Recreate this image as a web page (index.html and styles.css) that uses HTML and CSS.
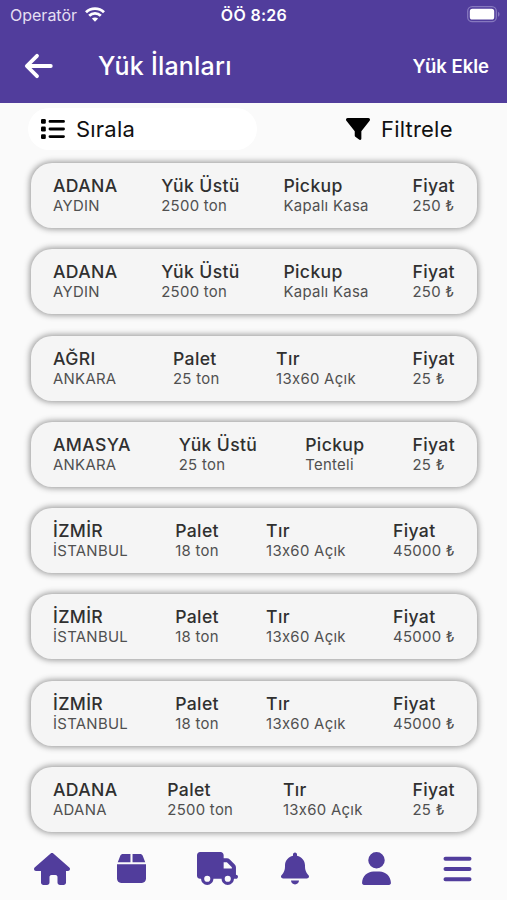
FILE: index.html
```html
<!DOCTYPE html>
<html lang="tr">
<head>
    <meta charset="UTF-8">
    <meta name="viewport" content="width=device-width, initial-scale=1.0">
    <title>Yük İlanları</title>
    <link rel="stylesheet" href="styles.css">
</head>
<body>
    <header>
        <div class="status-bar">
            <div class="carrier">
                <span>Operatör</span>
                <svg width="20" height="15" viewBox="0 0 20 15" fill="none" stroke="#fff" stroke-width="2.8">
                    <path d="M1 5.2C6 .3 14 .3 19 5.2"/>
                    <path d="M4.2 8.8c3.3-3.2 8.3-3.2 11.6 0"/>
                    <path d="M10 14.8 6.9 11.6c1.8-1.6 4.4-1.6 6.2 0z" fill="#fff" stroke="none"/>
                </svg>
            </div>
            <span class="time">ÖÖ 8:26</span>
            <div class="battery">
                <svg width="33" height="17" viewBox="0 0 33 17">
                    <rect x=".7" y=".7" width="28.6" height="15" rx="4.5" fill="none" stroke="#8678be" stroke-width="1.3"/>
                    <rect x="2.8" y="2.8" width="24.4" height="10.8" rx="2.6" fill="#fff"/>
                    <path d="M31 5.7c2 .8 2 4.2 0 5z" fill="#8678be"/>
                </svg>
            </div>
        </div>
        <div class="app-bar">
            <a href="#" class="back">
                <svg width="30" height="26" viewBox="0 0 30 26" fill="none" stroke="#fff" stroke-width="3.8" stroke-linecap="round" stroke-linejoin="round">
                    <path d="M13 2.8 2.8 13 13 23.2M3.5 13h23.3"/>
                </svg>
            </a>
            <h1>Yük İlanları</h1>
            <a href="#" class="add">Yük Ekle</a>
        </div>
    </header>

    <div class="toolbar">
        <button class="tool sort">
            <svg width="24" height="20" viewBox="0 0 24 20">
                <rect width="4.8" height="4.8" rx="1.2"/>
                <rect y="7.6" width="4.8" height="4.8" rx="1.2"/>
                <rect y="15.2" width="4.8" height="4.8" rx="1.2"/>
                <path d="M9 2.4h13.5M9 10h13.5M9 17.6h13.5" stroke="#000" stroke-width="2.9" stroke-linecap="round"/>
            </svg>
            <span>Sırala</span>
        </button>
        <button class="tool filter">
            <svg width="24" height="22" viewBox="0 0 25 22" preserveAspectRatio="none">
                <path d="M1.7 0h21.6c1.5 0 2.2 1.7 1.3 2.8L16 13.3v7.1c0 1.300-1.400 2-2.400 1.200L9.700 18.700c-.4-.3-.6-.8-.6-1.200v-4.200L.4 2.800C-.5 1.700.2 0 1.700 0z"/>
            </svg>
            <span>Filtrele</span>
        </button>
    </div>

    <main>
        <div class="card">
            <div class="col"><b>ADANA</b><span>AYDIN</span></div>
            <div class="col"><b>Yük Üstü</b><span>2500 ton</span></div>
            <div class="col"><b>Pickup</b><span>Kapalı Kasa</span></div>
            <div class="col"><b>Fiyat</b><span>250 ₺</span></div>
        </div>
        <div class="card">
            <div class="col"><b>ADANA</b><span>AYDIN</span></div>
            <div class="col"><b>Yük Üstü</b><span>2500 ton</span></div>
            <div class="col"><b>Pickup</b><span>Kapalı Kasa</span></div>
            <div class="col"><b>Fiyat</b><span>250 ₺</span></div>
        </div>
        <div class="card">
            <div class="col"><b>AĞRI</b><span>ANKARA</span></div>
            <div class="col"><b>Palet</b><span>25 ton</span></div>
            <div class="col"><b>Tır</b><span>13x60 Açık</span></div>
            <div class="col"><b>Fiyat</b><span>25 ₺</span></div>
        </div>
        <div class="card">
            <div class="col"><b>AMASYA</b><span>ANKARA</span></div>
            <div class="col"><b>Yük Üstü</b><span>25 ton</span></div>
            <div class="col"><b>Pickup</b><span>Tenteli</span></div>
            <div class="col"><b>Fiyat</b><span>25 ₺</span></div>
        </div>
        <div class="card">
            <div class="col"><b>İZMİR</b><span>İSTANBUL</span></div>
            <div class="col"><b>Palet</b><span>18 ton</span></div>
            <div class="col"><b>Tır</b><span>13x60 Açık</span></div>
            <div class="col"><b>Fiyat</b><span>45000 ₺</span></div>
        </div>
        <div class="card">
            <div class="col"><b>İZMİR</b><span>İSTANBUL</span></div>
            <div class="col"><b>Palet</b><span>18 ton</span></div>
            <div class="col"><b>Tır</b><span>13x60 Açık</span></div>
            <div class="col"><b>Fiyat</b><span>45000 ₺</span></div>
        </div>
        <div class="card">
            <div class="col"><b>İZMİR</b><span>İSTANBUL</span></div>
            <div class="col"><b>Palet</b><span>18 ton</span></div>
            <div class="col"><b>Tır</b><span>13x60 Açık</span></div>
            <div class="col"><b>Fiyat</b><span>45000 ₺</span></div>
        </div>
        <div class="card">
            <div class="col"><b>ADANA</b><span>ADANA</span></div>
            <div class="col"><b>Palet</b><span>2500 ton</span></div>
            <div class="col"><b>Tır</b><span>13x60 Açık</span></div>
            <div class="col"><b>Fiyat</b><span>25 ₺</span></div>
        </div>
    </main>

    <nav>
        <a href="#">
            <svg width="36" height="32" viewBox="0 0 576 512"><path d="M575.8 255.5c0 18-15 32.100-32 32.100h-32l.7 160.200c0 2.700-.2 5.400-.5 8.100V472c0 22.100-17.900 40-40 40h-56c-22.100 0-40-17.900-40-40v-88c0-17.700-14.300-32-32-32h-64c-17.700 0-32 14.300-32 32v88c0 22.100-17.900 40-40 40h-56c-22.100 0-40-17.900-40-40V287.600H32c-18 0-32-14-32-32.100 0-9 3-17 10-24L266.400 8c7-7 15-8 22-8s15 2 21 7l255.400 224.500c8 7 12 15 11 24z"/></svg>
        </a>
        <a href="#">
            <svg width="29" height="29" viewBox="0 0 448 448"><path d="M50.700 26.500C58 10 74 0 92 0h116v128H12zM240 0h116c18 0 34 10 41.300 26.500L436 128H240zM0 160h448v224c0 35.300-28.700 64-64 64H64c-35.300 0-64-28.700-64-64z"/></svg>
        </a>
        <a href="#">
            <svg width="41" height="33" viewBox="0 0 640 512"><path fill-rule="evenodd" d="M48 0C21.500 0 0 21.500 0 48v320c0 26.500 21.500 48 48 48h16c0 53 43 96 96 96s96-43 96-96h128c0 53 43 96 96 96s96-43 96-96h32c17.700 0 32-14.300 32-32s-14.300-32-32-32V237.300c0-17-6.700-33.300-18.700-45.300L512 114.700c-12-12-28.300-18.700-45.300-18.700H416V48c0-26.500-21.500-48-48-48zM416 160h50.700L544 237.300V256H416zM160 368a48 48 0 1 1 0 96 48 48 0 0 1 0-96zM480 368a48 48 0 1 1 0 96 48 48 0 0 1 0-96z"/></svg>
        </a>
        <a href="#">
            <svg width="28" height="33" viewBox="0 0 448 512"><path d="M224 0c-17.700 0-32 14.300-32 32v19.200C119 66 64 130.600 64 208v18.800c0 47-17.300 92.400-48.500 127.600l-7.400 8.300C-.3 372.100-2.300 385.600 2.800 397S19.400 416 32 416h384c12.600 0 24-7.400 29.200-19s3.100-24.900-5.300-34.300l-7.400-8.300C401.300 319.200 384 273.900 384 226.800V208c0-77.400-55-142-128-156.800V32c0-17.700-14.300-32-32-32zm45.300 493.300c12-12 18.700-28.300 18.700-45.300H160c0 17 6.700 33.300 18.700 45.300S207 512 224 512s33.300-6.700 45.300-18.700z"/></svg>
        </a>
        <a href="#">
            <svg width="29" height="33" viewBox="0 0 448 512"><path d="M224 256a128 128 0 1 0 0-256 128 128 0 0 0 0 256zm-45.700 48C79.800 304 0 383.800 0 482.300 0 498.700 13.300 512 29.700 512h388.600c16.400 0 29.700-13.300 29.700-29.700C448 383.800 368.200 304 269.700 304z"/></svg>
        </a>
        <a href="#">
            <svg width="29" height="26" viewBox="0 0 29 26" fill="none" stroke="#513d9c" stroke-width="4" stroke-linecap="round"><path d="M2.500 2.800h24M2.500 13h24M2.500 23.200h24"/></svg>
        </a>
    </nav>
</body>
</html>
```
FILE: styles.css
```css
* {
    margin: 0;
    padding: 0;
    box-sizing: border-box;
    font-family: 'Inter', sans-serif;
}

body {
    background-color: #fafafa;
    color: #303030;
    height: 100vh;
    display: flex;
    flex-direction: column;
    overflow: hidden;
}

a {
    color: inherit;
    text-decoration: none;
}

svg {
    display: block;
    flex-shrink: 0;
}

header {
    background-color: #513d9c;
    color: #fff;
    height: 103px;
}

.status-bar {
    height: 29px;
    padding: 0 7px 0 10px;
    display: grid;
    grid-template-columns: 1fr auto 1fr;
    align-items: center;
}

.carrier {
    display: flex;
    align-items: center;
    gap: 8px;
    font-size: 16px;
    color: #e4dff2;
}

.time {
    margin-right: 2px;
    font-size: 16px;
    font-weight: 600;
    letter-spacing: 0.3px;
}

.battery {
    display: flex;
    justify-content: flex-end;
}

.app-bar {
    height: 74px;
    padding: 0 18px 0 24px;
    display: flex;
    align-items: center;
}

h1 {
    margin-left: 44px;
    font-size: 25px;
    font-weight: 500;
    letter-spacing: 0.2px;
}

.add {
    margin-left: auto;
    font-size: 18.5px;
    font-weight: 600;
}

.toolbar {
    height: 51px;
    padding: 0 24px 0 28px;
    display: flex;
    align-items: center;
    justify-content: space-between;
}

.tool {
    height: 42px;
    border: none;
    border-radius: 21px;
    background-color: transparent;
    display: flex;
    align-items: center;
    gap: 11px;
    font-size: 22px;
    letter-spacing: 0.2px;
    color: #111;
}

.sort {
    width: 229px;
    padding-left: 13px;
    background-color: #fff;
}

.filter {
    width: 137px;
}

main {
    flex: 1;
    padding: 9px 30px 0 31px;
    display: flex;
    flex-direction: column;
    gap: 21.3px;
}

.card {
    height: 65px;
    flex-shrink: 0;
    padding: 12px 22px 0;
    border-radius: 21px;
    background-color: #f5f5f5;
    box-shadow: 0 0 6px 0.5px rgba(0, 0, 0, 0.42);
    display: flex;
    justify-content: space-between;
}

.col {
    display: flex;
    flex-direction: column;
}

.col b {
    font-size: 17.6px;
    font-weight: 500;
    line-height: 22px;
    letter-spacing: 0.35px;
}

.col span {
    font-size: 14.9px;
    line-height: 18px;
    letter-spacing: 0.3px;
    color: #505050;
}

nav {
    height: 60px;
    padding: 0 0 3px 34px;
    background-color: #fbfbfb;
    display: grid;
    grid-template-columns: 83px 80px 84px 81px 81px 82px;
    align-items: center;
    fill: #513d9c;
}
```
